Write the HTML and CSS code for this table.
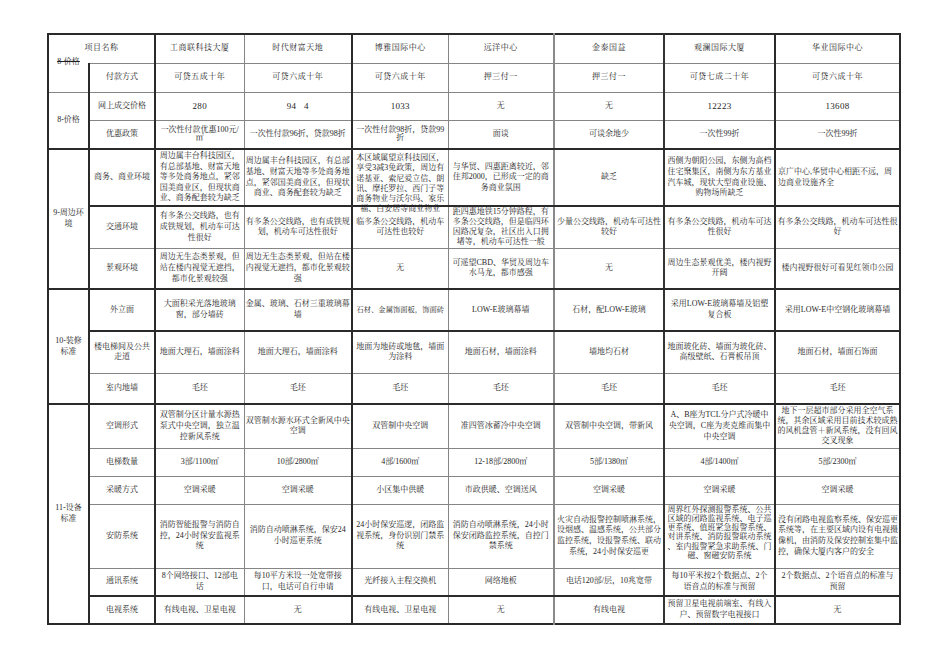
FILE: index.html
```html
<!DOCTYPE html>
<html lang="zh">
<head>
<meta charset="utf-8">
<title>项目对比</title>
<link rel="stylesheet" href="styles.css">
</head>
<body>
<table class="sheet">
<colgroup>
<col class="c1"><col class="c2"><col class="c3"><col class="c4"><col class="c5"><col class="c6"><col class="c7"><col class="c8"><col class="c9">
</colgroup>
<tbody>
<tr class="h29 hdr">
<td colspan="2" class="nb-b">项目名称</td>
<td>工商联科技大厦</td><td>时代财富天地</td><td>博雅国际中心</td><td>远洋中心</td><td>金泰国益</td><td>观澜国际大厦</td><td>华业国际中心</td>
</tr>
<tr class="h29 sp">
<td class="nb-t top"><span class="strike">8-价格</span></td>
<td class="nsp">付款方式</td><td>可贷五成十年</td><td>可贷六成十年</td><td>可贷六成十年</td><td>押三付一</td><td>押三付一</td><td>可贷七成二十年</td><td>可贷六成十年</td>
</tr>
<tr class="h28">
<td rowspan="2">8-价格</td>
<td>网上成交价格</td><td class="num">280</td><td class="num">94&nbsp;&nbsp;&nbsp;4</td><td class="num">1033</td><td>无</td><td>无</td><td class="num">12223</td><td class="num">13608</td>
</tr>
<tr class="h29">
<td>优惠政策</td>
<td class="lh9">一次性付款优惠100元/<br>㎡</td>
<td>一次性付款96折，贷款98折</td>
<td class="lh9">一次性付款98折，贷款99<br>折</td>
<td>面谈</td><td>可谈余地少</td><td>一次性99折</td><td>一次性99折</td>
</tr>
<tr class="h57 tk">
<td rowspan="3">9-周边环<br>境</td>
<td>商务、商业环境</td>
<td>周边属丰台科技园区，<br>有总部基地、财富天地<br>等多处商务地点，紧邻<br>国美商业区，但现状商<br>业、商务配套较为缺乏</td>
<td>周边属丰台科技园区，有总部<br>基地、财富天地等多处商务地<br>点，紧邻国美商业区，但现状<br>商业、商务配套较为缺乏</td>
<td class="top"><div class="ov">本区域属望京科技园区，<br>享受3减3免政策，周边有<br>诺基亚、索尼爱立信、朗<br>讯、摩托罗拉、西门子等<br>商务物业与沃尔玛、家乐<br>福、白安居等商业物业</div></td>
<td>与华贸、四惠距离较近，邻<br>住邦2000，已形成一定的商<br>务商业氛围</td>
<td>缺乏</td>
<td>西侧为朝阳公园，东侧为高档<br>住宅聚集区，南侧为东方基业<br>汽车城，现状大型商业设施、<br>购物场所缺乏</td>
<td class="l">京广中心,华贸中心相距不远，周<br>边商业设施齐全</td>
</tr>
<tr class="h42 tk">
<td>交通环境</td>
<td>有多条公交线路，也有<br>成铁规划，机动车可达<br>性很好</td>
<td>有多条公交线路，也有成铁规<br>划，机动车可达性很好</td>
<td>临多条公交线路，机动车<br>可达性也较好</td>
<td class="lh10">距四惠地铁15分钟路程，有<br>多条公交线路，但是临四环<br>因路况复杂，社区出入口拥<br>堵等，机动车可达性一般</td>
<td>少量公交线路，机动车可达性<br>较好</td>
<td>有多条公交线路，机动车可达<br>性很好</td>
<td>有多条公交线路，机动车可达性很<br>好</td>
</tr>
<tr class="h41">
<td>景观环境</td>
<td>周边无生态类景观，但<br>站在楼内视觉无遮挡，<br>都市化景观较强</td>
<td>周边无生态类景观，但站在楼<br>内视觉无遮挡，都市化景观较<br>强</td>
<td>无</td>
<td>可遥望CBD、华贸及周边车<br>水马龙，都市感强</td>
<td>无</td>
<td>周边生态景观优美，楼内视野<br>开阔</td>
<td>楼内视野很好可看见红领巾公园</td>
</tr>
<tr class="h42 tk">
<td rowspan="3">10-装修<br>标准</td>
<td>外立面</td>
<td>大面积采光落地玻璃<br>窗，部分墙砖</td>
<td>金属、玻璃、石材三重玻璃幕<br>墙</td>
<td class="sm">石材、金属饰面板，饰面砖</td>
<td>LOW-E玻璃幕墙</td>
<td>石材，配LOW-E玻璃</td>
<td>采用LOW-E玻璃幕墙及铝塑<br>复合板</td>
<td>采用LOW-E中空钢化玻璃幕墙</td>
</tr>
<tr class="h42 tk">
<td>楼电梯间及公共<br>走道</td>
<td>地面大理石，墙面涂料</td>
<td>地面大理石，墙面涂料</td>
<td>地面为地砖或地毯，墙面<br>为涂料</td>
<td>地面石材，墙面涂料</td>
<td>墙地均石材</td>
<td>地面玻化砖、墙面为玻化砖、<br>高级壁纸、石膏板吊顶</td>
<td>地面石材，墙面石饰面</td>
</tr>
<tr class="h31">
<td>室内地墙</td>
<td>毛坯</td><td>毛坯</td><td>毛坯</td><td>毛坯</td><td>毛坯</td><td>毛坯</td><td>毛坯</td>
</tr>
<tr class="h44 tk">
<td rowspan="6">11-设备<br>标准</td>
<td>空调形式</td>
<td>双管制分区计量水源热<br>泵式中央空调，独立温<br>控新风系统</td>
<td>双管制水源水环式全新风中央<br>空调</td>
<td>双管制中央空调</td>
<td>准四管冰蓄冷中央空调</td>
<td>双管制中央空调，带新风</td>
<td>A、B座为TCL分户式冷暖中<br>央空调，C座为麦克维而集中<br>中央空调</td>
<td class="lh10">地下一层超市部分采用全空气系<br>统，其余区域采用目前技术较成熟<br>的风机盘管＋新风系统，没有回风<br>交叉现象</td>
</tr>
<tr class="h28">
<td>电梯数量</td>
<td>3部/1100㎡</td><td>10部/2800㎡</td><td>4部/1600㎡</td><td>12-18部/2800㎡</td><td>5部/1380㎡</td><td>4部/1400㎡</td><td>5部/2300㎡</td>
</tr>
<tr class="h28">
<td>采暖方式</td>
<td>空调采暖</td><td>空调采暖</td><td>小区集中供暖</td><td>市政供暖、空调送风</td><td>空调采暖</td><td>空调采暖</td><td>空调采暖</td>
</tr>
<tr class="h64">
<td>安防系统</td>
<td>消防智能报警与消防自<br>控，24小时保安监视系<br>统</td>
<td>消防自动喷淋系统，保安24<br>小时巡更系统</td>
<td>24小时保安巡逻，闭路监<br>视系统，身份识别门禁系<br>统</td>
<td>消防自动喷淋系统，24小时<br>保安闭路监控系统，自控门<br>禁系统</td>
<td>火灾自动报警控制喷淋系统，<br>设烟感、温感系统，公共部分<br>监控系统，设报警系统、联动<br>系统，24小时保安巡更</td>
<td class="top lh93">周界红外探测报警系统、公共<br>区域的闭路监视系统、电子巡<br>更系统、值班紧急报警系统、<br>对讲系统、消防报警联动系统<br>、室内报警紧急求助系统、门<br>磁、窗磁安防系统</td>
<td class="l">没有闭路电视监察系统、保安巡更<br>系统等，在主要区域内设有电视摄<br>像机，由消防及保安控制室集中监<br>控，确保大厦内客户的安全</td>
</tr>
<tr class="h28">
<td>通讯系统</td>
<td>8个网络接口、12部电<br>话</td>
<td>每10平方米设一处宽带接<br>口，电话可自行申请</td>
<td>光纤接入主程交换机</td>
<td>网络地板</td>
<td>电话120部/层，10兆宽带</td>
<td>每10平米按2个数据点、2个<br>语音点的标准与预留</td>
<td>2个数据点、2个语音点的标准与<br>预留</td>
</tr>
<tr class="h28 tk">
<td>电视系统</td>
<td>有线电视、卫星电视</td>
<td>无</td>
<td>有线电视、卫星电视</td>
<td>无</td>
<td>有线电视</td>
<td>预留卫星电视前端室、有线入<br>户、预留数字电视接口</td>
<td>无</td>
</tr>
</tbody>
</table>
</body>
</html>
```

FILE: styles.css
```css
html, body {
  margin: 0;
  padding: 0;
  background: #ffffff;
}

body {
  font-family: "Liberation Serif", "Noto Serif CJK SC", "Noto Sans CJK SC", serif;
  color: #1e1e1e;
}

.sheet {
  border-collapse: collapse;
  table-layout: fixed;
  width: 852px;
  margin: 33px 0 0 47px;
  border: 2px solid #2a2a2a;
  font-size: 8px;
  line-height: 10.6px;
}

.sheet td {
  border: 1px solid #858585;
  padding: 0 1px;
  text-align: center;
  vertical-align: middle;
  white-space: nowrap;
  overflow: visible;
}

col.c1 { width: 41px; border-right: 2px solid #2a2a2a; }
col.c2 { width: 66px; border-right: 2px solid #2a2a2a; }
col.c3 { width: 89px; border-right: 1px solid #333333; }
col.c4 { width: 108px; border-right: 2px solid #2a2a2a; }
col.c5 { width: 96px; }
col.c6 { width: 106px; border-right: 2px solid #8a8a8a; }
col.c7 { width: 110px; border-right: 2px solid #333333; }
col.c8 { width: 111px; border-right: 2px solid #2a2a2a; }
col.c9 { width: 125px; }

tr.h28 { height: 28px; }
tr.h29 { height: 29px; }
tr.h31 { height: 31px; }
tr.h41 { height: 41px; }
tr.h42 { height: 42px; }
tr.h44 { height: 44px; }
tr.h57 { height: 57px; }
tr.h64 { height: 64px; }

.sheet tr.tk > td {
  border-top: 2px solid #2a2a2a;
}

.sheet tr.hdr > td,
.sheet tr.sp > td {
  letter-spacing: 0.5px;
}

.sheet tr.sp > td.nsp {
  letter-spacing: 0;
}

.sheet td.nb-b { border-bottom: none; }
.sheet td.nb-t { border-top: none; }

.sheet td.top { vertical-align: top; }

.strike {
  display: block;
  margin-top: -6px;
  text-decoration: line-through;
  letter-spacing: 0;
}

.sheet td.num {
  font-size: 9px;
  letter-spacing: 0.3px;
}

.sheet td.l {
  text-align: left;
  padding-left: 2px;
}

.sheet td.sm { font-size: 7.3px; }

.sheet td.lh9 { line-height: 8.6px; }
.sheet td.lh10 { line-height: 10px; }
.sheet td.lh93 { line-height: 9.3px; }

.ov {
  height: 52px;
  padding-top: 3px;
  line-height: 10.3px;
}
```
